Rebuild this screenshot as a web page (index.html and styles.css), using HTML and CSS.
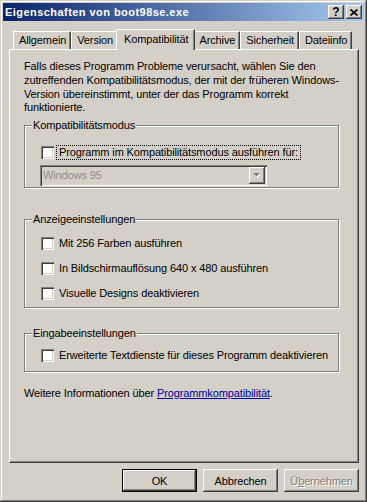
FILE: index.html
```html
<!DOCTYPE html>
<html lang="de">
<head>
  <meta charset="utf-8" />
  <title>Eigenschaften von boot98se.exe</title>
  <link rel="stylesheet" href="styles.css">
</head>
<body>
  <div class="window">
    <div class="titlebar">
      <span class="title">Eigenschaften von boot98se.exe</span>
      <div class="caption-buttons">
        <span class="caption-btn">?</span>
        <span class="caption-btn">
          <svg width="8" height="7" viewBox="0 0 8 7"><path d="M0.5 0.5l7 6M7.5 0.5l-7 6" stroke="#000" stroke-width="1.6" fill="none"/></svg>
        </span>
      </div>
    </div>

    <div class="client">
      <div class="tabs">
        <div class="tab">Allgemein</div>
        <div class="tab">Version</div>
        <div class="tab active">Kompatibilität</div>
        <div class="tab">Archive</div>
        <div class="tab">Sicherheit</div>
        <div class="tab">Dateiinfo</div>
      </div>

      <div class="panel">
        <p class="intro">Falls dieses Programm Probleme verursacht, wählen Sie den<br>zutreffenden Kompatibilitätsmodus, der mit der früheren Windows-<br>Version übereinstimmt, unter der das Programm korrekt<br>funktionierte.</p>

        <fieldset class="group group-compat">
          <legend>Kompatibilitätsmodus</legend>
          <div class="group-body">
            <label class="check">
              <span class="box"></span>
              <span class="check-label focused">Programm im Kompatibilitätsmodus ausführen für:</span>
            </label>
            <div class="combo">
              <span class="combo-text">Windows 95</span>
              <span class="combo-button">
                <svg width="8" height="5" viewBox="0 0 8 5"><polygon points="1,1 8,1 4.5,4.5" fill="#fff"/><polygon points="0,0 7,0 3.5,3.5" fill="#808080"/></svg>
              </span>
            </div>
          </div>
        </fieldset>

        <fieldset class="group group-display">
          <legend>Anzeigeeinstellungen</legend>
          <div class="group-body rows">
            <label class="check"><span class="box"></span><span class="check-label">Mit 256 Farben ausführen</span></label>
            <label class="check"><span class="box"></span><span class="check-label">In Bildschirmauflösung 640 x 480 ausführen</span></label>
            <label class="check"><span class="box"></span><span class="check-label">Visuelle Designs deaktivieren</span></label>
          </div>
        </fieldset>

        <fieldset class="group group-input">
          <legend>Eingabeeinstellungen</legend>
          <div class="group-body">
            <label class="check"><span class="box"></span><span class="check-label">Erweiterte Textdienste für dieses Programm deaktivieren</span></label>
          </div>
        </fieldset>

        <p class="more">Weitere Informationen über <a href="#">Programmkompatibilität</a>.</p>
      </div>

      <div class="buttons">
        <button type="button" class="btn default">OK</button>
        <button type="button" class="btn">Abbrechen</button>
        <button type="button" class="btn disabled">Ü<u>b</u>ernehmen</button>
      </div>
    </div>
  </div>
</body>
</html>
```

FILE: styles.css
```css
* {
  box-sizing: border-box;
}

body {
  margin: 0;
  font-family: "Liberation Sans", Arial, sans-serif;
  font-size: 11px;
  letter-spacing: -0.12px;
  color: #000;
  background-color: #d4d0c8;
}

.window {
  width: 367px;
  height: 502px;
  padding: 3px;
  background-color: #d4d0c8;
  box-shadow: inset -1px -1px #404040, inset 1px 1px #d4d0c8, inset -2px -2px #808080, inset 2px 2px #fff;
}

.titlebar {
  height: 18px;
  display: flex;
  align-items: center;
  justify-content: space-between;
  padding: 0 2px;
  background: linear-gradient(to right, #0a246a, #a6caf0);
}

.title {
  color: #fff;
  font-weight: bold;
  letter-spacing: 0.45px;
}

.caption-buttons {
  display: flex;
  gap: 2px;
}

.caption-btn {
  width: 16px;
  height: 14px;
  display: flex;
  align-items: center;
  justify-content: center;
  background-color: #d4d0c8;
  font-weight: bold;
  font-size: 12px;
  letter-spacing: 0;
  box-shadow: inset -1px -1px #404040, inset 1px 1px #fff, inset -2px -2px #808080;
}

.client {
  padding: 8px 5px 0 6px;
}

/* tab strip */
.tabs {
  display: flex;
  align-items: flex-end;
  height: 20px;
  padding-left: 4px;
}

.tab {
  height: 18px;
  line-height: 17px;
  padding: 0 4px 0 5px;
  border-top: 1px solid #fff;
  border-left: 1px solid #fff;
  border-right: 1px solid #404040;
  box-shadow: inset -1px 0 #808080;
  white-space: nowrap;
}

.tab.active {
  position: relative;
  z-index: 1;
  height: 21px;
  line-height: 19px;
  margin: 0 -2px -1px;
  padding: 0 6px 0 7px;
  background-color: #d4d0c8;
}

.panel {
  height: 414px;
  padding: 10px 0 0 14px;
  border: 1px solid;
  border-color: #fff #404040 #404040 #fff;
  box-shadow: inset -1px -1px #808080;
}

.intro {
  margin: 0;
  line-height: 13.75px;
}

/* group boxes */
.group {
  width: 315px;
  min-width: 0;
  margin: 0;
  padding: 0 0 0 7px;
  border: 1px solid #808080;
  box-shadow: inset 1px 1px #fff, 1px 1px #fff;
}

.group legend {
  padding: 0 1px;
  line-height: 14px;
  background-color: #d4d0c8;
}

.group-body {
  padding-left: 8px;
}

.group-compat {
  margin-top: 3px;
  padding-top: 14px;
  padding-bottom: 1px;
}

.group-display {
  margin-top: 24px;
  padding-top: 11px;
  padding-bottom: 7px;
}

.group-input {
  margin-top: 18px;
  padding-top: 9px;
  padding-bottom: 9px;
}

.rows {
  display: flex;
  flex-direction: column;
  gap: 12px;
}

.check {
  display: flex;
  align-items: center;
  height: 13px;
}

.box {
  width: 13px;
  height: 13px;
  margin: 0 3px 0 1px;
  background-color: #fff;
  box-shadow: inset 1px 1px #808080, inset 2px 2px #404040, inset -1px -1px #fff, inset -2px -2px #d4d0c8;
}

.check-label {
  padding: 0 2px;
  line-height: 13px;
  white-space: nowrap;
}

.check-label.focused {
  outline: 1px dotted #000;
}

/* disabled combo box */
.combo {
  display: flex;
  width: 227px;
  height: 21px;
  margin-top: 6px;
  padding: 2px;
  box-shadow: inset 1px 1px #808080, inset 2px 2px #404040, inset -1px -1px #fff, inset -2px -2px #d4d0c8;
}

.combo-text {
  flex: 1;
  padding-left: 1px;
  line-height: 17px;
  color: #8c8c8c;
}

.combo-button {
  width: 16px;
  display: flex;
  align-items: center;
  justify-content: center;
  box-shadow: inset -1px -1px #404040, inset 1px 1px #fff, inset -2px -2px #808080;
}

.more {
  margin: 14px 0 0;
  line-height: 14px;
}

.more a {
  color: #0000a0;
}

/* dialog buttons */
.buttons {
  display: flex;
  justify-content: flex-end;
  gap: 6px;
  margin-top: 6px;
}

.btn {
  width: 75px;
  height: 23px;
  padding: 0;
  border: none;
  font: inherit;
  letter-spacing: inherit;
  color: #000;
  background-color: #d4d0c8;
  box-shadow: inset -1px -1px #404040, inset 1px 1px #fff, inset -2px -2px #808080;
}

.btn.default {
  border: 1px solid #000;
}

.btn.disabled {
  color: #808080;
  text-shadow: 1px 1px #fff;
}
```
